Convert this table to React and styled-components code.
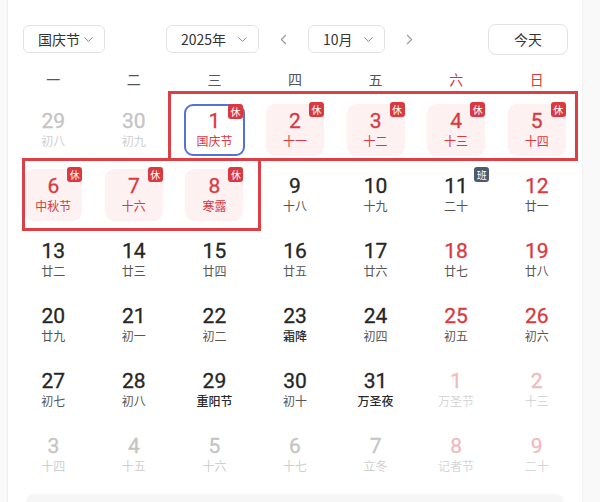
import React from "react";
import styled, { createGlobalStyle, css } from "styled-components";
import { ChevronDown, ChevronLeft, ChevronRight } from "lucide-react";

const GlobalStyle = createGlobalStyle`
  html, body {
    margin: 0;
    padding: 0;
    background: #f9f9f9;
    font-family: Roboto, "Noto Sans CJK SC", sans-serif;
  }
`;

const RED = "#d9393f";

// type: fade/fadeRed = other month, rest = weekend, off = holiday, work = 班
const weeks = [
  [
    { d: 29, l: "初八", type: "fade" },
    { d: 30, l: "初九", type: "fade" },
    { d: 1, l: "国庆节", type: "off", today: true },
    { d: 2, l: "十一", type: "off" },
    { d: 3, l: "十二", type: "off" },
    { d: 4, l: "十三", type: "off" },
    { d: 5, l: "十四", type: "off" },
  ],
  [
    { d: 6, l: "中秋节", type: "off" },
    { d: 7, l: "十六", type: "off" },
    { d: 8, l: "寒露", type: "off" },
    { d: 9, l: "十八" },
    { d: 10, l: "十九" },
    { d: 11, l: "二十", type: "work" },
    { d: 12, l: "廿一", type: "rest" },
  ],
  [
    { d: 13, l: "廿二" },
    { d: 14, l: "廿三" },
    { d: 15, l: "廿四" },
    { d: 16, l: "廿五" },
    { d: 17, l: "廿六" },
    { d: 18, l: "廿七", type: "rest" },
    { d: 19, l: "廿八", type: "rest" },
  ],
  [
    { d: 20, l: "廿九" },
    { d: 21, l: "初一" },
    { d: 22, l: "初二" },
    { d: 23, l: "霜降", strong: true },
    { d: 24, l: "初四" },
    { d: 25, l: "初五", type: "rest" },
    { d: 26, l: "初六", type: "rest" },
  ],
  [
    { d: 27, l: "初七" },
    { d: 28, l: "初八" },
    { d: 29, l: "重阳节", strong: true },
    { d: 30, l: "初十" },
    { d: 31, l: "万圣夜", strong: true },
    { d: 1, l: "万圣节", type: "fadeRed" },
    { d: 2, l: "十三", type: "fadeRed" },
  ],
  [
    { d: 3, l: "十四", type: "fade" },
    { d: 4, l: "十五", type: "fade" },
    { d: 5, l: "十六", type: "fade" },
    { d: 6, l: "十七", type: "fade" },
    { d: 7, l: "立冬", type: "fade" },
    { d: 8, l: "记者节", type: "fadeRed" },
    { d: 9, l: "二十", type: "fadeRed" },
  ],
];

const weekdays = ["一", "二", "三", "四", "五", "六", "日"];

export default function App() {
  return (
    <>
      <GlobalStyle />
      <Panel>
        <Header>
          <Select $w={82}>
            国庆节
            <ChevronDown size={15} strokeWidth={1.6} />
          </Select>
          <Nav>
            <Select $w={93}>
              2025年
              <ChevronDown size={15} strokeWidth={1.6} />
            </Select>
            <Arrow>
              <ChevronLeft size={17} strokeWidth={1.5} />
            </Arrow>
            <Select $w={77}>
              10月
              <ChevronDown size={15} strokeWidth={1.6} />
            </Select>
            <Arrow>
              <ChevronRight size={17} strokeWidth={1.5} />
            </Arrow>
          </Nav>
          <TodayButton>今天</TodayButton>
        </Header>

        <WeekRow>
          {weekdays.map((w, i) => (
            <WeekName key={w} $red={i > 4}>
              {w}
            </WeekName>
          ))}
        </WeekRow>

        <Grid>
          {weeks.flat().map((c, i) => (
            <Slot key={i}>
              <Cell $type={c.type} $today={c.today}>
                <Num $type={c.type}>{c.d}</Num>
                <Lunar $type={c.type} $strong={c.strong}>
                  {c.l}
                </Lunar>
                {c.type === "off" && <Badge>休</Badge>}
                {c.type === "work" && <Badge $work>班</Badge>}
              </Cell>
            </Slot>
          ))}
          <Mark $left={155} $top={-6} $w={410} $h={70} />
          <Mark $left={9} $top={61} $w={239} $h={73} />
        </Grid>

        <Footer />
      </Panel>
    </>
  );
}

const Panel = styled.div`
  width: 576px;
  margin-left: 7px;
  min-height: 502px;
  background: #fff;
  border-left: 1px solid #eeeeee;
  border-right: 1px solid #f0f0f0;
  box-sizing: border-box;
  padding: 24px 5px 0 5px;
  overflow: hidden;
`;

const Header = styled.div`
  display: flex;
  align-items: center;
  padding: 0 9px 0 10px;
  height: 30px;
`;

const Nav = styled.div`
  display: flex;
  align-items: center;
  margin-left: 61px;
`;

const Select = styled.div`
  width: ${(p) => p.$w}px;
  height: 28px;
  box-sizing: border-box;
  border: 1px solid #e3e3e3;
  border-radius: 6px;
  display: flex;
  align-items: center;
  justify-content: space-between;
  padding: 0 8px 0 14px;
  font-size: 14px;
  color: #333;
  font-family: "Noto Sans CJK SC", sans-serif;
  svg {
    color: #888;
  }
`;

const Arrow = styled.div`
  width: 49px;
  display: flex;
  justify-content: center;
  color: #999;
`;

const TodayButton = styled.div`
  margin-left: auto;
  width: 80px;
  height: 31px;
  box-sizing: border-box;
  border: 1px solid #e3e3e3;
  border-radius: 8px;
  display: flex;
  align-items: center;
  justify-content: center;
  font-size: 14px;
  color: #333;
  font-family: "Noto Sans CJK SC", sans-serif;
`;

const WeekRow = styled.div`
  display: grid;
  grid-template-columns: repeat(7, 1fr);
  height: 24px;
  margin-top: 13px;
  align-items: center;
`;

const WeekName = styled.div`
  text-align: center;
  font-size: 14px;
  font-family: "Noto Sans CJK SC", sans-serif;
  color: ${(p) => (p.$red ? RED : "#555")};
`;

const Grid = styled.div`
  position: relative;
  display: grid;
  grid-template-columns: repeat(7, 1fr);
  grid-auto-rows: 65px;
  margin-top: 6px;
`;

const Slot = styled.div`
  display: flex;
  align-items: center;
  justify-content: center;
`;

const Cell = styled.div`
  position: relative;
  width: 58px;
  height: 52px;
  box-sizing: border-box;
  border-radius: 9px;
  display: flex;
  flex-direction: column;
  align-items: center;
  justify-content: center;
  padding-bottom: 1px;
  ${(p) =>
    p.$type === "off" &&
    css`
      background: #fdf1f1;
    `}
  ${(p) =>
    p.$today &&
    css`
      width: 61px;
      background: #fff;
      border: 2px solid #5773d1;
    `}
`;

const numColor = {
  fade: "#c4c4c4",
  fadeRed: "#f1b9bc",
  off: RED,
  rest: RED,
};

const lunarColor = {
  fade: "#cfcfcf",
  fadeRed: "#d6d6d6",
  off: RED,
};

const Num = styled.div`
  font-size: 21px;
  font-weight: 400;
  line-height: 24px;
  color: ${(p) => numColor[p.$type] || "#262626"};
  -webkit-text-stroke: 0.3px currentColor;
`;

const Lunar = styled.div`
  font-size: 12px;
  line-height: 16px;
  font-family: "Noto Sans CJK SC", sans-serif;
  font-weight: ${(p) => (p.$strong ? 500 : 400)};
  color: ${(p) =>
    lunarColor[p.$type] || (p.$strong ? "#2b2b2b" : "#555")};
`;

const Badge = styled.span`
  position: absolute;
  top: -2px;
  right: 0px;
  width: 15px;
  height: 15px;
  border-radius: 3px;
  background: ${(p) => (p.$work ? "#4d5a6e" : RED)};
  color: #fff;
  font-size: 10px;
  line-height: 15px;
  text-align: center;
  font-family: "Noto Sans CJK SC", sans-serif;
  ${(p) =>
    p.$work &&
    css`
      right: -4px;
    `}
`;

const Mark = styled.div`
  position: absolute;
  left: ${(p) => p.$left}px;
  top: ${(p) => p.$top}px;
  width: ${(p) => p.$w}px;
  height: ${(p) => p.$h}px;
  border: 3px solid #dc4046;
  box-sizing: border-box;
  pointer-events: none;
`;

const Footer = styled.div`
  margin: 7px 13px 0 13px;
  height: 30px;
  background: #f6f6f7;
  border-radius: 8px;
`;
